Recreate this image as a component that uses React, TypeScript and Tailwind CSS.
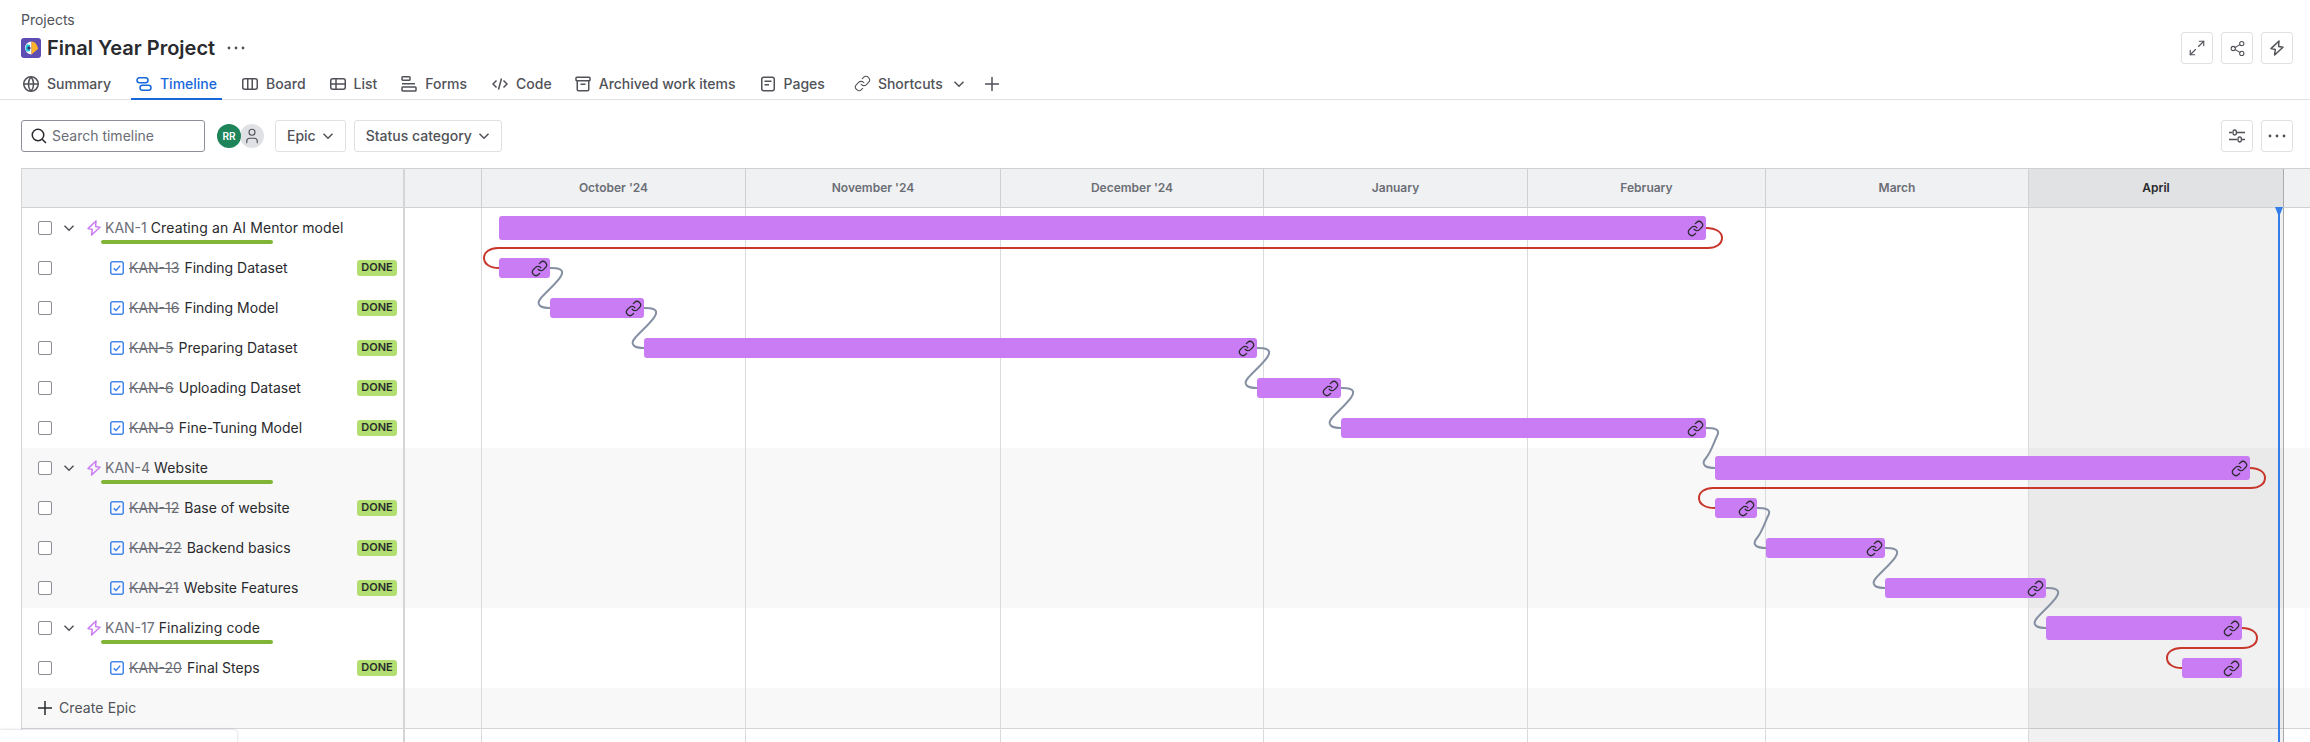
import React from "react";
import { Link, Maximize2, Share2, User } from "lucide-react";

const G = "#505258";

function Chevron({ className = "" }: { className?: string }) {
  return (
    <svg width="12" height="12" viewBox="0 0 12 12" fill="none" stroke="currentColor" strokeWidth="1.5" className={`shrink-0 ${className}`}>
      <path d="M1.5 3.75L6 8.25L10.5 3.75" />
    </svg>
  );
}
function PlusIcon({ color = G }: { color?: string }) {
  return (
    <svg width="16" height="16" viewBox="0 0 16 16" fill="none" stroke={color} strokeWidth="1.5" className="shrink-0">
      <path d="M7 1V15M0 8H14" />
    </svg>
  );
}
function Dots({ width = 18, color = G }: { width?: number; color?: string }) {
  return (
    <svg width={width} height="6" viewBox="0 0 18 6" fill={color}>
      <circle cx="2" cy="3" r="1.4" />
      <circle cx="9" cy="3" r="1.4" />
      <circle cx="16" cy="3" r="1.4" />
    </svg>
  );
}
function SearchIcon() {
  return (
    <svg width="16" height="16" viewBox="0 0 16 16" fill="none" stroke="#292a2e" strokeWidth="1.5" className="shrink-0">
      <circle cx="7" cy="7" r="5.75" />
      <path d="M11.2 11.2L15 15" />
    </svg>
  );
}
function GlobeIcon() {
  return (
    <svg width="16" height="16" viewBox="0 0 16 16" fill="none" stroke={G} strokeWidth="1.5">
      <circle cx="8" cy="8" r="7.25" />
      <path d="M0.75 8H15.25M8 0.75C4.5 5 4.5 11 8 15.25C11.5 11 11.5 5 8 0.75Z" />
    </svg>
  );
}
function TimelineIcon() {
  return (
    <svg width="16" height="16" viewBox="0 0 16 16" fill="none" stroke="#1868db" strokeWidth="1.5">
      <rect x="1" y="1.75" width="11" height="5" rx="2.5" />
      <rect x="4" y="9.25" width="11" height="5" rx="2.5" />
    </svg>
  );
}
function BoardIcon() {
  return (
    <svg width="16" height="16" viewBox="0 0 16 16" fill="none" stroke={G} strokeWidth="1.5">
      <rect x="0.75" y="2.75" width="14.5" height="10.5" rx="2" />
      <path d="M5.75 2.75V13.25M10.25 2.75V13.25" />
    </svg>
  );
}
function ListIcon() {
  return (
    <svg width="16" height="16" viewBox="0 0 16 16" fill="none" stroke={G} strokeWidth="1.5">
      <rect x="0.75" y="2.75" width="14.5" height="10.5" rx="2" />
      <path d="M0.75 8H15.25M6 2.75V13.25" />
    </svg>
  );
}
function FormsIcon() {
  return (
    <svg width="16" height="16" viewBox="0 0 16 16" fill="none" stroke={G} strokeWidth="1.5">
      <rect x="1" y="0.75" width="8" height="3.5" rx="0.8" />
      <path d="M1 7.75H14" />
      <rect x="1" y="11" width="14" height="4" rx="0.8" />
    </svg>
  );
}
function CodeIcon() {
  return (
    <svg width="16" height="16" viewBox="0 0 16 16" fill="none" stroke={G} strokeWidth="1.5">
      <path d="M4.5 4.5L1 8L4.5 11.5M11.5 4.5L15 8L11.5 11.5M9.5 2.5L6.5 13.5" />
    </svg>
  );
}
function ArchiveIcon() {
  return (
    <svg width="16" height="16" viewBox="0 0 16 16" fill="none" stroke={G} strokeWidth="1.5">
      <rect x="1" y="1.25" width="14" height="3.5" rx="0.8" />
      <path d="M2.25 4.75V13.5A1.25 1.25 0 0 0 3.5 14.75H12.5A1.25 1.25 0 0 0 13.75 13.5V4.75M5.5 8.25H10.5" />
    </svg>
  );
}
function PagesIcon() {
  return (
    <svg width="16" height="16" viewBox="0 0 16 16" fill="none" stroke={G} strokeWidth="1.5">
      <rect x="1.75" y="1.25" width="12.5" height="13.5" rx="2" />
      <path d="M4.5 5.25H11.5M4.5 8.75H9" />
    </svg>
  );
}
function BoltIcon({ color }: { color: string }) {
  return (
    <svg width="16" height="16" viewBox="0 0 16 16" fill="none" stroke={color} strokeWidth="1.5" strokeLinejoin="round">
      <path d="M10 1L2 8.6L6.3 9.4L5.6 15L14 7.2L9.6 6.4Z" />
    </svg>
  );
}
function TaskIcon() {
  return (
    <svg width="14" height="14" viewBox="0 0 14 14" fill="none" className="shrink-0">
      <rect x="0.75" y="0.75" width="12.5" height="12.5" rx="2" stroke="#4688ec" strokeWidth="1.5" />
      <path d="M3.8 7.2L6 9.4L10.2 4.6" stroke="#357de8" strokeWidth="1.4" />
    </svg>
  );
}
function SlidersIcon() {
  return (
    <svg width="16" height="16" viewBox="0 0 16 16" fill="none" stroke={G} strokeWidth="1.4">
      <path d="M0 4.5H3M8 4.5H16M0 11.5H8M13 11.5H16" />
      <rect x="4" y="2" width="3.4" height="5" rx="1.7" />
      <rect x="9" y="9" width="3.4" height="5" rx="1.7" />
    </svg>
  );
}
function ProjectIcon() {
  return (
    <svg width="20" height="20" viewBox="0 0 20 20" className="shrink-0">
      <rect width="20" height="20" rx="3" fill="#5e4db2" />
      <path d="M10.5 3.5A6.5 6.5 0 0 0 10.5 16.5Z" fill="#fff" />
      <path d="M6 6.2A6 6 0 0 0 6 13.8L9 13L9 7Z" fill="#22c4dc" />
      <path d="M10.5 3.5C14 3.5 16.5 7 17 11L10.5 16.5Z" fill="#fbb32a" />
      <circle cx="8" cy="10" r="1.6" fill="#352c63" />
    </svg>
  );
}

function IconBtn({ children }: { children: React.ReactNode }) {
  return (
    <div className="flex h-8 w-8 items-center justify-center rounded-[3px] border border-[#dfe1e4] text-[#505258]">
      {children}
    </div>
  );
}
function FilterBtn({ label }: { label: string }) {
  return (
    <div className="flex h-8 items-center gap-[6px] rounded-[3px] border border-[#dfe1e4] pl-[11px] pr-[11px] text-sm font-medium text-[#505258]">
      {label}
      <Chevron />
    </div>
  );
}

const tabs = [
  { label: "Summary", icon: <GlobeIcon />, ml: "" },
  { label: "Timeline", icon: <TimelineIcon />, active: true, ml: "" },
  { label: "Board", icon: <BoardIcon />, ml: "" },
  { label: "List", icon: <ListIcon />, ml: "-ml-[1px]" },
  { label: "Forms", icon: <FormsIcon />, ml: "-ml-[1px]" },
  { label: "Code", icon: <CodeIcon />, ml: "" },
  { label: "Archived work items", icon: <ArchiveIcon />, ml: "-ml-[2px]" },
  { label: "Pages", icon: <PagesIcon />, ml: "-ml-[1px]" },
];

const months = [
  { label: "", w: 77 },
  { label: "October '24", w: 264 },
  { label: "November '24", w: 255 },
  { label: "December '24", w: 263 },
  { label: "January", w: 264 },
  { label: "February", w: 238 },
  { label: "March", w: 263 },
  { label: "April", w: 255, now: true },
  { label: "", w: 26 },
];

type Row = { id: string; title: string; epic?: boolean; x1: number; x2: number; bg?: boolean };
const rows: Row[] = [
  { id: "KAN-1", title: "Creating an AI Mentor model", epic: true, x1: 499, x2: 1706 },
  { id: "KAN-13", title: "Finding Dataset", x1: 499, x2: 550 },
  { id: "KAN-16", title: "Finding Model", x1: 550, x2: 644 },
  { id: "KAN-5", title: "Preparing Dataset", x1: 644, x2: 1257 },
  { id: "KAN-6", title: "Uploading Dataset", x1: 1257, x2: 1341 },
  { id: "KAN-9", title: "Fine-Tuning Model", x1: 1341, x2: 1706 },
  { id: "KAN-4", title: "Website", epic: true, x1: 1715, x2: 2250, bg: true },
  { id: "KAN-12", title: "Base of website", x1: 1715, x2: 1757, bg: true },
  { id: "KAN-22", title: "Backend basics", x1: 1766, x2: 1885, bg: true },
  { id: "KAN-21", title: "Website Features", x1: 1885, x2: 2046, bg: true },
  { id: "KAN-17", title: "Finalizing code", epic: true, x1: 2046, x2: 2242 },
  { id: "KAN-20", title: "Final Steps", x1: 2182, x2: 2242 },
];

function gray(x1: number, y1: number, x2: number, y2: number) {
  return `M${x1} ${y1} C${x1 + 8} ${y1} ${x1 + 15} ${y1 + 1} ${x1 + 11} ${y1 + 8} C${x1 + 8} ${y1 + 14} ${x2 - 4} ${y2 - 16} ${x2 - 9} ${y2 - 10} C${x2 - 15} ${y2 - 3} ${x2 - 9} ${y2} ${x2} ${y2}`;
}
function red(x1: number, y1: number, x2: number, y2: number, xR: number, xL: number) {
  const m = (y1 + y2) / 2;
  return `M${x1} ${y1} C${xR - 6} ${y1} ${xR} ${y1 + 4} ${xR} ${y1 + 10} C${xR} ${m - 4} ${xR - 6} ${m} ${xR - 14} ${m} L${xL + 14} ${m} C${xL + 6} ${m} ${xL} ${m + 4} ${xL} ${m + 10} C${xL} ${y2 - 4} ${xL + 6} ${y2} ${x2} ${y2}`;
}

const grayPaths = [
  gray(550, 268, 550, 308),
  gray(644, 308, 644, 348),
  gray(1257, 348, 1257, 388),
  gray(1341, 388, 1341, 428),
  gray(1706, 428, 1715, 468),
  gray(1757, 508, 1766, 548),
  gray(1885, 548, 1885, 588),
  gray(2046, 588, 2046, 628),
];
const redPaths = [
  red(1706, 228, 499, 268, 1722, 484),
  red(2250, 468, 1715, 508, 2265, 1699),
  red(2242, 628, 2182, 668, 2257, 2167),
];

function LeftRow({ r }: { r: Row }) {
  return (
    <div className={`relative flex h-10 items-center pl-4 text-sm ${r.bg ? "bg-[#f8f8f8]" : "bg-white"}`}>
      <span className="h-[14px] w-[14px] shrink-0 rounded-[2px] border border-[#8c8f97] bg-white" />
      {r.epic ? (
        <>
          <span className="ml-[9px] flex w-4 justify-center text-[#505258]">
            <Chevron />
          </span>
          <span className="ml-[9px] flex w-4 justify-center">
            <BoltIcon color="#c97cf4" />
          </span>
          <span className="ml-[3px] text-[#6b6e76]">{r.id}</span>
          <span className="ml-[4px] tracking-[0.12px] text-[#292a2e]">{r.title}</span>
          <span className="absolute left-[79px] top-[32px] h-1 w-[172px] rounded-full bg-[#82b536]" />
        </>
      ) : (
        <>
          <span className="ml-[58px]">
            <TaskIcon />
          </span>
          <span className="ml-[5px] text-[#6b6e76] line-through">{r.id}</span>
          <span className="ml-[5px] text-[#292a2e]">{r.title}</span>
          <span className="ml-auto mr-[6px] flex h-4 w-10 items-center justify-center rounded-[3px] bg-[#b3df72] text-[11px] font-semibold text-[#292a2e]">
            DONE
          </span>
        </>
      )}
    </div>
  );
}

function RightRow({ r }: { r: Row }) {
  return (
    <div className={`relative h-10 ${r.bg ? "bg-[#f8f8f8]" : "bg-white"}`}>
      <div
        className={`absolute z-10 flex items-center justify-end rounded-[3px] bg-[#c97cf4] pr-[2px] text-[#292a2e] ${r.epic ? "top-2 h-6" : "top-[10px] h-5"}`}
        style={{ left: r.x1 - 405, width: r.x2 - r.x1 }}
      >
        <Link size={17} strokeWidth={1.75} />
      </div>
    </div>
  );
}

export default function App() {
  return (
    <div className="relative flex h-[742px] w-[2310px] flex-col overflow-hidden bg-white font-['Inter',sans-serif] text-[#292a2e]">
      <div className="pl-[21px] pr-[17px] pt-[10px]">
        <div className="flex h-5 items-center text-sm text-[#505258]">Projects</div>
        <div className="mt-[2px] flex h-8 items-center justify-between">
          <div className="flex items-center">
            <ProjectIcon />
            <span className="ml-[6px] text-[20px] font-semibold">Final Year Project</span>
            <span className="ml-[12px] flex">
              <Dots />
            </span>
          </div>
          <div className="flex gap-2">
            <IconBtn><Maximize2 size={18} strokeWidth={1.5} /></IconBtn>
            <IconBtn><Share2 size={17} strokeWidth={1.5} /></IconBtn>
            <IconBtn><BoltIcon color={G} /></IconBtn>
          </div>
        </div>
      </div>

      <div className="mt-1 flex h-8 items-center gap-[15px] border-b border-[#dfe1e4] pl-[18px]">
        {tabs.map((t) => (
          <div key={t.label} className={`relative flex h-full items-center gap-2 px-[5px] text-sm font-medium text-[#505258] ${t.ml}`}>
            {t.icon}
            <span className={t.active ? "text-[#1868db]" : ""}>{t.label}</span>
            {t.active && <span className="absolute bottom-[-1px] left-0 right-0 h-[2px] bg-[#1868db]" />}
          </div>
        ))}
        <div className="ml-[5px] flex h-full items-center gap-[7px] px-[5px] text-sm font-medium text-[#505258]">
          <Link size={17} strokeWidth={1.5} className="-ml-[1px]" />
          <span>Shortcuts</span>
          <Chevron className="ml-[3px]" />
        </div>
        <span className="ml-0">
          <PlusIcon />
        </span>
      </div>

      <div className="flex h-[68px] items-start justify-between pl-[21px] pr-[17px] pt-5">
        <div className="flex items-center">
          <div className="flex h-8 w-[184px] items-center gap-[5px] rounded-[3px] border border-[#8c8f97] pl-[9px] text-sm text-[#6b6e76]">
            <SearchIcon />
            Search timeline
          </div>
          <div className="ml-3 flex items-center">
            <span className="z-10 flex h-6 w-6 items-center justify-center rounded-full bg-[#1f845a] text-[10px] font-semibold text-white">RR</span>
            <span className="-ml-px flex h-6 w-6 items-center justify-center rounded-full bg-[#dfe1e4] text-[#505258]">
              <User size={18} strokeWidth={1.5} />
            </span>
          </div>
          <div className="ml-[11px] flex gap-2">
            <FilterBtn label="Epic" />
            <FilterBtn label="Status category" />
          </div>
        </div>
        <div className="flex gap-2">
          <IconBtn><SlidersIcon /></IconBtn>
          <IconBtn><Dots /></IconBtn>
        </div>
      </div>

      <div className="ml-[21px] flex min-h-0 flex-1">
        <div className="w-[384px] shrink-0 border-l border-r-2 border-[#d4d5d7]">
          <div className="h-10 border-y border-[#cfd0d2] bg-[#f0f1f2]" />
          {rows.map((r) => (
            <LeftRow key={r.id} r={r} />
          ))}
          <div className="flex h-10 items-center gap-[5px] bg-[#f8f8f8] pl-4 text-sm tracking-[0.1px] text-[#505258]">
            <PlusIcon color="#292a2e" />
            Create Epic
          </div>
          <div className="border-t border-[#d4d5d7]" />
        </div>

        <div className="flex min-w-0 flex-1 flex-col">
          <div className="flex h-10 border-y border-[#cfd0d2] bg-[#f0f1f2]">
            {months.map((m, i) => (
              <div
                key={i}
                className={`flex shrink-0 items-center justify-center border-r text-xs font-semibold ${m.now ? "border-[#a9aaad] bg-[#e1e2e4] text-[#292a2e]" : "border-[#cfd0d2] text-[#6b6e76]"} ${i === months.length - 1 ? "border-r-0" : ""}`}
                style={{ width: m.w }}
              >
                {m.label}
              </div>
            ))}
          </div>
          <div className="relative flex-1">
            {rows.map((r) => (
              <RightRow key={r.id} r={r} />
            ))}
            <div className="h-10 bg-[#f8f8f8]" />
            <div className="border-t border-[#d4d5d7]" />
            <div className="absolute inset-0 z-[5] flex">
              {months.map((m, i) => (
                <div
                  key={i}
                  className={`shrink-0 border-r ${m.now ? "border-[#a9aaad] bg-[#0b1228]/[0.06]" : "border-[#d9dadc]"} ${i === months.length - 1 ? "border-r-0" : ""}`}
                  style={{ width: m.w }}
                />
              ))}
            </div>
            <svg className="absolute inset-0 z-[6]" width="1905" height="534" viewBox="405 208 1905 534" fill="none" strokeWidth="2">
              {grayPaths.map((d, i) => (
                <path key={i} d={d} stroke="#8590a2" />
              ))}
              {redPaths.map((d, i) => (
                <path key={i} d={d} stroke="#c9372c" />
              ))}
            </svg>
            <div className="absolute bottom-0 left-[1873px] top-0 z-20 w-[2px] bg-[#357de8]">
              <svg className="absolute -left-[3px] top-[-1px]" width="8" height="8" viewBox="0 0 8 8">
                <path d="M0 0H8L4.8 8H3.2Z" fill="#357de8" />
              </svg>
            </div>
          </div>
        </div>
      </div>

      <div className="absolute bottom-0 left-0 z-30 h-3 w-[237px] rounded-tr-[4px] bg-white shadow-[0_0_3px_rgba(9,30,66,0.25)]" />
    </div>
  );
}
